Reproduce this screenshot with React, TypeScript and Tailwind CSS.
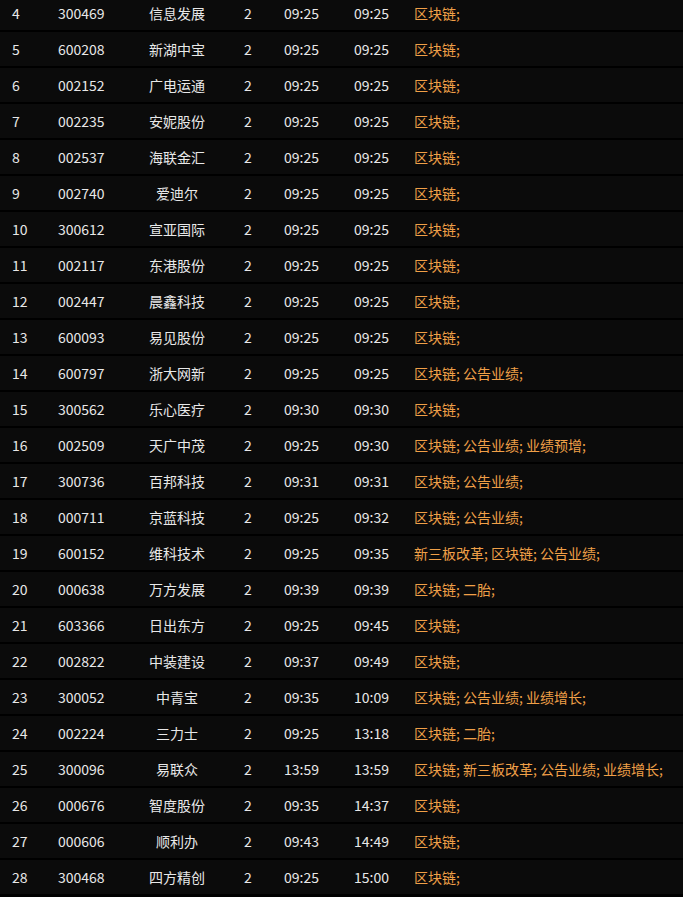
const rows: [number,string,string,string,string,string][] = [
[4,"300469","信息发展","09:25","09:25","区块链;"],
[5,"600208","新湖中宝","09:25","09:25","区块链;"],
[6,"002152","广电运通","09:25","09:25","区块链;"],
[7,"002235","安妮股份","09:25","09:25","区块链;"],
[8,"002537","海联金汇","09:25","09:25","区块链;"],
[9,"002740","爱迪尔","09:25","09:25","区块链;"],
[10,"300612","宣亚国际","09:25","09:25","区块链;"],
[11,"002117","东港股份","09:25","09:25","区块链;"],
[12,"002447","晨鑫科技","09:25","09:25","区块链;"],
[13,"600093","易见股份","09:25","09:25","区块链;"],
[14,"600797","浙大网新","09:25","09:25","区块链; 公告业绩;"],
[15,"300562","乐心医疗","09:30","09:30","区块链;"],
[16,"002509","天广中茂","09:25","09:30","区块链; 公告业绩; 业绩预增;"],
[17,"300736","百邦科技","09:31","09:31","区块链; 公告业绩;"],
[18,"000711","京蓝科技","09:25","09:32","区块链; 公告业绩;"],
[19,"600152","维科技术","09:25","09:35","新三板改革; 区块链; 公告业绩;"],
[20,"000638","万方发展","09:39","09:39","区块链; 二胎;"],
[21,"603366","日出东方","09:25","09:45","区块链;"],
[22,"002822","中装建设","09:37","09:49","区块链;"],
[23,"300052","中青宝","09:35","10:09","区块链; 公告业绩; 业绩增长;"],
[24,"002224","三力士","09:25","13:18","区块链; 二胎;"],
[25,"300096","易联众","13:59","13:59","区块链; 新三板改革; 公告业绩; 业绩增长;"],
[26,"000676","智度股份","09:35","14:37","区块链;"],
[27,"000606","顺利办","09:43","14:49","区块链;"],
[28,"300468","四方精创","09:25","15:00","区块链;"],
];
export default function App(){
  return <div className="w-[683px] h-[897px] overflow-hidden bg-black text-[14px] text-[#e8e8e8]" style={{fontFamily:'"Noto Sans CJK SC", sans-serif'}}>
    <div className="-mt-1">
    {rows.map(r=> <div key={r[0]} className="flex items-center h-[34px] mb-[2px] bg-[#0b0b0b] pl-3 whitespace-nowrap">
      <div className="w-[46px]">{r[0]}</div>
      <div className="w-[82px]">{r[1]}</div>
      <div className="w-[74px] text-center">{r[2]}</div>
      <div className="w-[70px] pl-[30px]">2</div>
      <div className="w-[70px]">{r[3]}</div>
      <div className="w-[60px]">{r[4]}</div>
      <div className="text-[#f0a048]">{r[5]}</div>
    </div>)}
    </div>
  </div>
}
